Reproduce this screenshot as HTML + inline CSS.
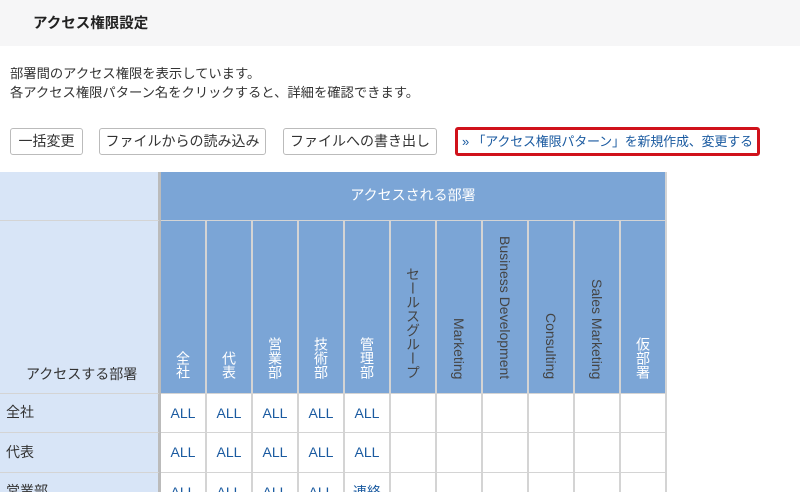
<!DOCTYPE html>
<html><head><meta charset="utf-8"><style>
*{margin:0;padding:0;box-sizing:border-box}
html,body{width:800px;height:492px;overflow:hidden}
body{background:#fff;font-family:"Liberation Sans","Noto Sans CJK JP",sans-serif;color:#333;position:relative}
.hd{position:absolute;left:0;top:0;width:800px;height:46px;background:#f6f6f7;}
.hd span{position:absolute;left:33px;top:12px;font-size:14.5px;font-weight:bold;color:#222}
.p{position:absolute;left:10px;font-size:13.3px;color:#333}
.b{position:absolute;top:128px;height:27px;border:1px solid #bbb;border-radius:3px;background:#fff;font-size:14px;text-align:center;line-height:25px;color:#333;white-space:nowrap}
.r{position:absolute;left:455px;top:127px;width:305px;height:29px;border:3px solid #d0121b;border-radius:3px;font-size:13px;color:#1a5aa0;line-height:23px;padding-left:4px;white-space:nowrap;letter-spacing:-0.2px}
.c{position:absolute;border-right:2px solid #d4d4d4;border-bottom:2px solid #d4d4d4}
.lb{background:#d8e5f7}
.bl{background:#7ba5d6}
.w{background:#fff}
.v{position:absolute;bottom:14px;left:0;width:44px;display:flex;justify-content:center}
.vj{writing-mode:vertical-rl;color:#fff;font-size:14px;line-height:16px}
.vl{writing-mode:vertical-rl;color:#444;font-size:14px;line-height:16px}
.a{font-size:14px;color:#1a5aa0;text-align:center;line-height:38px;white-space:nowrap}
</style></head><body>
<div class="hd"><span>アクセス権限設定</span></div>
<div class="p" style="top:63px">部署間のアクセス権限を表示しています。</div>
<div class="p" style="top:82px">各アクセス権限パターン名をクリックすると、詳細を確認できます。</div>
<div class="b" style="left:10px;width:73px">一括変更</div>
<div class="b" style="left:99px;width:167px">ファイルからの読み込み</div>
<div class="b" style="left:283px;width:154px">ファイルへの書き出し</div>
<div class="r">» 「アクセス権限パターン」を新規作成、変更する</div>

<div class="c lb" style="left:0;top:172px;width:161px;height:50px;border-right:3px solid #bbb"></div>
<div class="c lb" style="left:0;top:221px;width:161px;height:174px;border-right:3px solid #bbb"><div style="position:absolute;left:26px;top:143px;font-size:14px">アクセスする部署</div></div>
<div class="c bl" style="left:161px;top:172px;width:506px;height:50px;color:#fff;font-size:14px;text-align:center;line-height:46px">アクセスされる部署</div>
<div id="cols"></div>
<div class="c lb" style="left:0;top:394px;width:161px;height:40px;border-right:3px solid #bbb"><div style="position:absolute;left:6px;top:8px;font-size:14px">全社</div></div>
<div class="c lb" style="left:0;top:433px;width:161px;height:41px;border-right:3px solid #bbb"><div style="position:absolute;left:6px;top:9px;font-size:14px">代表</div></div>
<div class="c lb" style="left:0;top:473px;width:161px;height:30px;border-right:3px solid #bbb"><div style="position:absolute;left:6px;top:8px;font-size:14px">営業部</div></div>
<script>
var h=[["全社",1],["代表",1],["営業部",1],["技術部",1],["管理部",1],["セールスグループ",0],["Marketing",0],["Business Development",0],["Consulting",0],["Sales Marketing",0],["仮部署",1]];
var r3=["ALL","ALL","ALL","ALL","連絡"];
var s="";
for(var i=0;i<11;i++){var x=161+i*46;
s+='<div class="c bl" style="left:'+x+'px;top:221px;width:46px;height:174px"><div class="v"><span class="'+(h[i][1]?'vj':'vl')+'">'+h[i][0]+'</span></div></div>';
s+='<div class="c w a" style="left:'+x+'px;top:394px;width:46px;height:40px">'+(i<5?'ALL':'')+'</div>';
s+='<div class="c w a" style="left:'+x+'px;top:433px;width:46px;height:41px">'+(i<5?'ALL':'')+'</div>';
s+='<div class="c w a" style="left:'+x+'px;top:473px;width:46px;height:40px">'+(i<5?r3[i]:'')+'</div>';}
document.getElementById('cols').innerHTML=s;
</script>
</body></html>
